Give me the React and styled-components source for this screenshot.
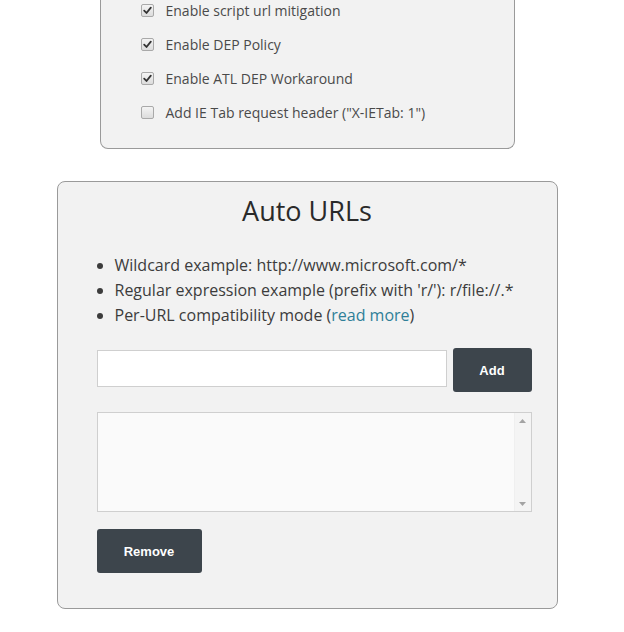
import React from "react";
import styled, { createGlobalStyle } from "styled-components";

const Global = createGlobalStyle`
  html, body { margin: 0; padding: 0; background: #fff; overflow: hidden; }
  body { font-family: "Open Sans", "Liberation Sans", sans-serif; }
`;

const Page = styled.div`
  width: 614px;
  display: flex;
  flex-direction: column;
  align-items: center;
  gap: 32px;
`;

const OptionsPanel = styled.section`
  box-sizing: border-box;
  width: 415px;
  background: #f2f2f2;
  border: 1px solid #9a9a9a;
  border-top: none;
  border-radius: 0 0 8px 8px;
  padding: 0 20px 26px 40px;
  display: flex;
  flex-direction: column;
  gap: 14px;
`;

const OptionRow = styled.label`
  display: flex;
  align-items: center;
  gap: 12px;
  height: 20px;
  font-size: 14px;
  color: #4a4a4a;
`;

const CheckBox = styled.span`
  box-sizing: border-box;
  width: 13px;
  height: 13px;
  border: 1px solid #a9a9a9;
  border-radius: 2px;
  background: linear-gradient(#f4f4f4, #dcdcdc);
  display: flex;
  align-items: center;
  justify-content: center;
  flex: none;
`;

const Check = ({ checked }) => (
  <CheckBox>
    {checked && (
      <svg width="9" height="9" viewBox="0 0 9 9">
        <path d="M1.2 4.6 L3.5 7 L7.8 1.6" fill="none" stroke="#333" strokeWidth="1.8" strokeLinecap="round" strokeLinejoin="round" />
      </svg>
    )}
  </CheckBox>
);

const Card = styled.section`
  box-sizing: border-box;
  width: 501px;
  background: #f2f2f2;
  border: 1px solid #9a9a9a;
  border-radius: 8px;
  padding: 13px 25px 35px 39px;
  display: flex;
  flex-direction: column;
`;

const Title = styled.h2`
  margin: 0 0 0 -14px;
  font-size: 27px;
  line-height: 32px;
  font-weight: 400;
  text-align: center;
  color: #2a2a2a;
`;

const Tips = styled.ul`
  margin: 26px 0 0;
  padding-left: 18px;
  font-size: 16px;
  line-height: 25px;
  color: #3c3c3c;
`;

const Link = styled.a`
  color: #2f7f98;
  text-decoration: none;
`;

const AddRow = styled.div`
  margin-top: 20px;
  display: flex;
  align-items: flex-start;
  gap: 6px;
`;

const UrlInput = styled.input`
  box-sizing: border-box;
  margin-top: 2px;
  width: 350px;
  height: 37px;
  border: 1px solid #cfcfcf;
  background: #fff;
  outline: none;
  font-family: inherit;
  font-size: 14px;
  padding: 0 8px;
`;

const Button = styled.button`
  box-sizing: border-box;
  width: ${(p) => p.$w}px;
  height: 44px;
  border: none;
  border-radius: 3px;
  background: #3d454c;
  color: #fff;
  font-family: "Liberation Sans", Arial, sans-serif;
  font-weight: 700;
  font-size: 13px;
  cursor: pointer;
`;

const ListBox = styled.div`
  box-sizing: border-box;
  margin-top: 20px;
  width: 435px;
  height: 100px;
  border: 1px solid #cfcfcf;
  background: #fafafa;
  display: flex;
  justify-content: flex-end;
`;

const ScrollTrack = styled.div`
  width: 16px;
  background: #f4f4f4;
  border-left: 1px solid #efefef;
  display: flex;
  flex-direction: column;
  justify-content: space-between;
  align-items: center;
  padding: 6px 0 5px;
`;

const Arrow = ({ down }) => (
  <svg width="7" height="4" viewBox="0 0 7 4">
    <path d={down ? "M0 0 H7 L3.5 4 Z" : "M0 4 H7 L3.5 0 Z"} fill="#a3a3a3" />
  </svg>
);

const RemoveRow = styled.div`
  margin-top: 17px;
  display: flex;
`;

export default function App() {
  return (
    <>
      <Global />
      <Page>
        <OptionsPanel>
          <OptionRow><Check checked />Enable script url mitigation</OptionRow>
          <OptionRow><Check checked />Enable DEP Policy</OptionRow>
          <OptionRow><Check checked />Enable ATL DEP Workaround</OptionRow>
          <OptionRow><Check />Add IE Tab request header ("X-IETab: 1")</OptionRow>
        </OptionsPanel>
        <Card>
          <Title>Auto URLs</Title>
          <Tips>
            <li>Wildcard example: http://www.microsoft.com/*</li>
            <li>Regular expression example (prefix with 'r/'): r/file://.*</li>
            <li>Per-URL compatibility mode (<Link href="#">read more</Link>)</li>
          </Tips>
          <AddRow>
            <UrlInput type="text" />
            <Button $w={79}>Add</Button>
          </AddRow>
          <ListBox>
            <ScrollTrack>
              <Arrow />
              <Arrow down />
            </ScrollTrack>
          </ListBox>
          <RemoveRow>
            <Button $w={105}>Remove</Button>
          </RemoveRow>
        </Card>
      </Page>
    </>
  );
}
